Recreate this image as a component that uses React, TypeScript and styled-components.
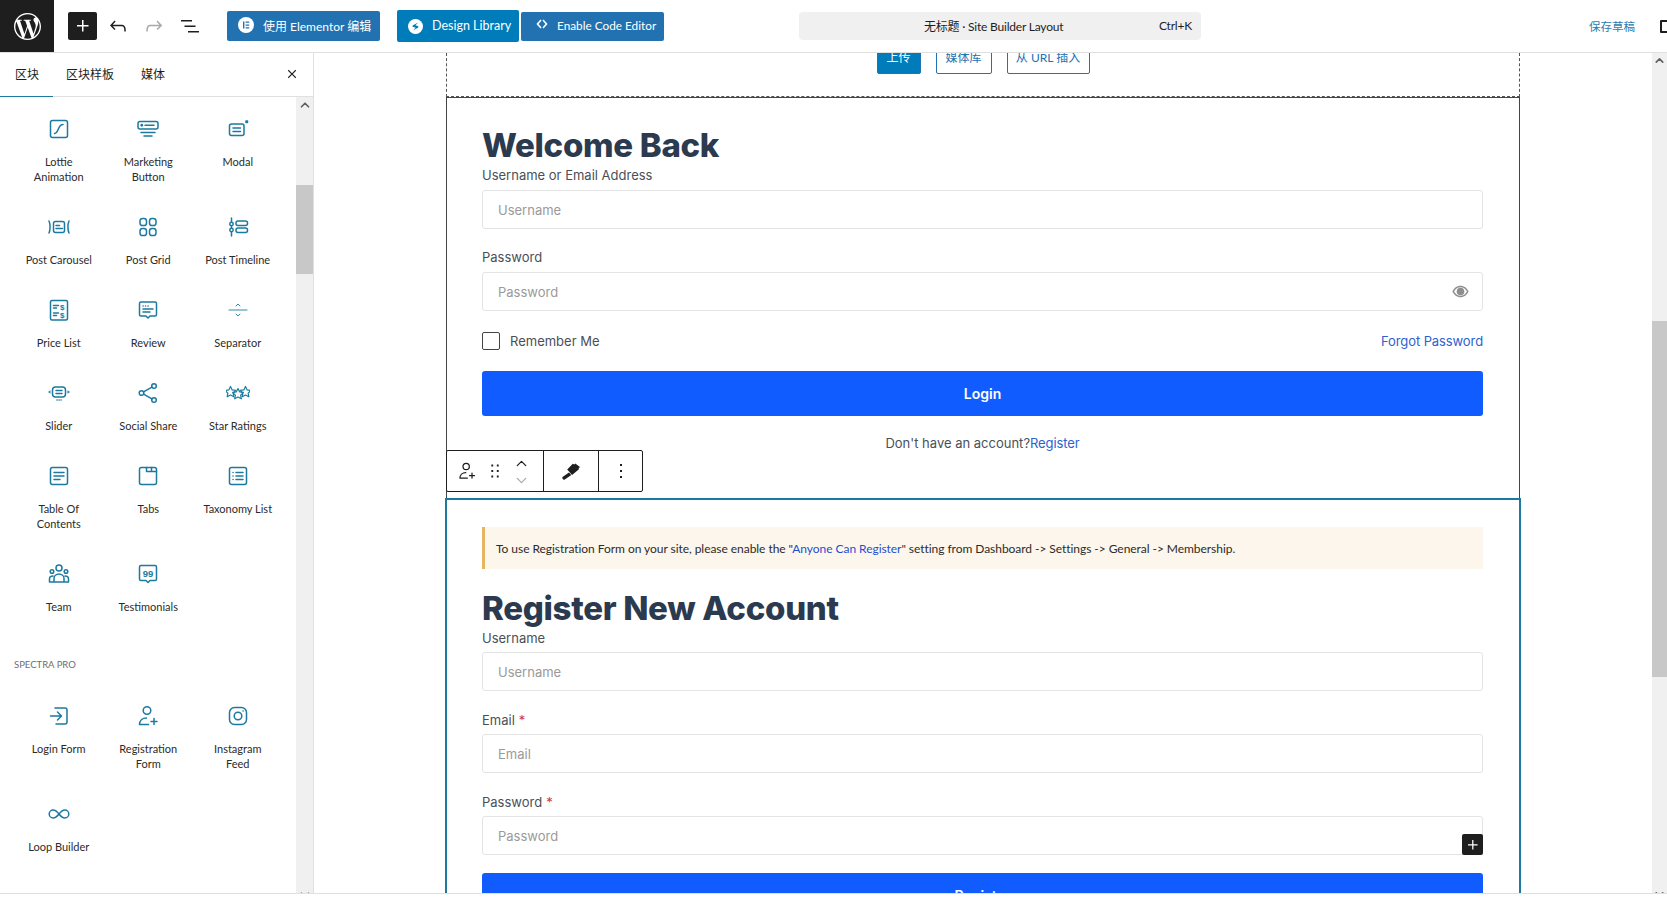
import React from "react";
import styled, { createGlobalStyle } from "styled-components";
import { SiWordpress } from "react-icons/si";
import { ChevronUp, ChevronDown } from "lucide-react";

const UI_FONT = `"Lato", "Noto Sans CJK SC", sans-serif`;
const FORM_FONT = `"Inter", "Noto Sans", sans-serif`;
const BLUE = "#2271b1";
const ACCENT = "#1c7aa0";

const GlobalStyle = createGlobalStyle`
  html, body { margin: 0; padding: 0; background: #fff; }
  * { box-sizing: border-box; }
`;

const Shell = styled.div`
  width: 1667px;
  height: 903px;
  display: flex;
  flex-direction: column;
  overflow: hidden;
  background: #fff;
  font-family: ${UI_FONT};
  color: #1e1e1e;
`;

/* top bar */
const TopBar = styled.header`
  height: 53px;
  flex: none;
  display: flex;
  align-items: center;
  border-bottom: 1px solid #e0e0e0;
  overflow: hidden;
`;

const LogoTile = styled.div`
  width: 54px;
  height: 52px;
  flex: none;
  display: flex;
  align-items: center;
  justify-content: center;
  background: #1e1e1e;
  color: #fff;
`;

const InserterButton = styled.div<{ $small?: boolean }>`
  width: ${(p) => (p.$small ? 21 : 29)}px;
  height: ${(p) => (p.$small ? 21 : 28)}px;
  margin-left: ${(p) => (p.$small ? 0 : 14)}px;
  margin-right: ${(p) => (p.$small ? 0 : 3)}px;
  flex: none;
  display: flex;
  align-items: center;
  justify-content: center;
  border-radius: 2px;
  background: #1e1e1e;
  color: #fff;
`;

const ToolIcon = styled.div<{ $muted?: boolean }>`
  width: 36px;
  flex: none;
  display: flex;
  justify-content: center;
  color: ${(p) => (p.$muted ? "#a8a8a8" : "#1e1e1e")};
`;

const BarButton = styled.div<{ $w: number; $h: number; $ml: number; $bg: string; $pad: number; $fs: number }>`
  width: ${(p) => p.$w}px;
  height: ${(p) => p.$h}px;
  margin-left: ${(p) => p.$ml}px;
  padding-left: ${(p) => p.$pad}px;
  flex: none;
  display: flex;
  align-items: center;
  gap: 9px;
  border-radius: 2px;
  background: ${(p) => p.$bg};
  color: #fff;
  font-size: ${(p) => p.$fs}px;
  white-space: nowrap;
  > span {
    margin-top: -2px;
  }
`;

const CommandBar = styled.div`
  width: 402px;
  height: 28px;
  margin-left: 135px;
  padding: 0 9px 2px 125px;
  flex: none;
  display: flex;
  align-items: center;
  justify-content: space-between;
  border-radius: 4px;
  background: #f0f0f0;
  font-size: 12px;
  letter-spacing: -0.2px;
  white-space: nowrap;
`;

const SaveDraft = styled.div`
  margin-left: 388px;
  flex: none;
  font-size: 11.5px;
  color: #2b7cb0;
  white-space: nowrap;
`;

const PreviewIcon = styled.div`
  width: 14px;
  height: 13px;
  margin-left: 25px;
  flex: none;
  border: 2px solid #1e1e1e;
  border-radius: 1px;
`;

/* body */
const Workspace = styled.div`
  height: 841px;
  flex: none;
  display: flex;
  border-bottom: 1px solid #e0e0e0;
  overflow: hidden;
`;

const Sidebar = styled.aside`
  width: 314px;
  flex: none;
  display: flex;
  flex-direction: column;
  border-right: 1px solid #e0e0e0;
`;

const TabRow = styled.div`
  height: 44px;
  flex: none;
  display: flex;
  align-items: stretch;
  position: relative;
  padding-left: 15px;
  gap: 27px;
  border-bottom: 1px solid #e0e0e0;
`;

const Tab = styled.div<{ $active?: boolean }>`
  padding-bottom: 2px;
  display: flex;
  align-items: center;
  position: relative;
  font-size: 12px;
  white-space: nowrap;
  &::after {
    content: "";
    display: ${(p) => (p.$active ? "block" : "none")};
    position: absolute;
    left: -15px;
    right: -14px;
    bottom: -1px;
    height: 1.5px;
    background: ${ACCENT};
  }
`;

const CloseTab = styled.div`
  position: absolute;
  right: 12px;
  top: 12px;
  display: flex;
`;

const SidebarBody = styled.div`
  flex: 1;
  min-height: 0;
  display: flex;
`;

const BlockScroll = styled.div`
  flex: 1;
  padding: 20px 0 0 14px;
  overflow: hidden;
`;

const BlockGrid = styled.div`
  display: grid;
  grid-template-columns: repeat(3, 89.5px);
  justify-items: center;
`;

const BlockItem = styled.div`
  width: 89px;
  padding-bottom: 31px;
  display: flex;
  flex-direction: column;
  align-items: center;
  color: ${ACCENT};
`;

const BlockLabel = styled.div`
  margin-top: 13px;
  text-align: center;
  font-size: 11px;
  line-height: 15px;
  color: #2b2b2b;
`;

const SectionTitle = styled.div`
  margin: 13px 0 32px;
  font-size: 9.5px;
  line-height: 14px;
  color: #6f6f6f;
`;

const ScrollTrack = styled.div<{ $w: number }>`
  width: ${(p) => p.$w}px;
  flex: none;
  display: flex;
  flex-direction: column;
  align-items: center;
  background: #f0f0f0;
  color: #606060;
`;

const ScrollThumb = styled.div<{ $top: number; $h: number }>`
  width: 100%;
  height: ${(p) => p.$h}px;
  margin-top: ${(p) => p.$top}px;
  background: #c8c8c8;
`;

const ScrollArrow = styled.div<{ $end?: boolean }>`
  height: 15px;
  flex: none;
  margin-top: ${(p) => (p.$end ? "auto" : "0")};
  margin-bottom: ${(p) => (p.$end ? "-9px" : "0")};
  display: flex;
  align-items: center;
  justify-content: center;
`;

/* canvas */
const Canvas = styled.main`
  flex: 1;
  min-width: 0;
  display: flex;
  flex-direction: column;
  align-items: center;
  overflow: hidden;
`;

const UploadStrip = styled.div`
  width: 1074px;
  height: 44px;
  flex: none;
  padding-bottom: 22px;
  display: flex;
  justify-content: center;
  align-items: flex-end;
  gap: 15px;
  border: 1px dashed #555;
  border-top: none;
`;

const UploadButton = styled.div<{ $primary?: boolean; $w: number }>`
  width: ${(p) => p.$w}px;
  height: 36px;
  flex: none;
  display: flex;
  align-items: center;
  justify-content: center;
  border: 1px solid ${BLUE};
  border-radius: 2px;
  background: ${(p) => (p.$primary ? "#007cba" : "#fff")};
  color: ${(p) => (p.$primary ? "#fff" : BLUE)};
  font-size: 12px;
  white-space: nowrap;
`;

const FormBlock = styled.section<{ $selected?: boolean }>`
  width: 1074px;
  flex: none;
  position: relative;
  padding: 27px 36px ${(p) => (p.$selected ? "0" : "48px")} 35px;
  border: 1px solid ${(p) => (p.$selected ? ACCENT : "#444")};
  border-bottom: ${(p) => (p.$selected ? undefined : "none")};
  outline: ${(p) => (p.$selected ? `1px solid ${ACCENT}` : "none")};
  font-family: ${FORM_FONT};
`;

const FormTitle = styled.h2<{ $mb: number }>`
  margin: 0 0 ${(p) => p.$mb}px;
  font-family: "Inter", sans-serif;
  font-size: 33px;
  line-height: 40px;
  font-weight: 800;
  letter-spacing: -0.3px;
  color: #2b3a4e;
`;

const Field = styled.div<{ $gap: number; $labelGap: number }>`
  position: relative;
  margin-bottom: ${(p) => p.$gap}px;
  > label {
    margin-bottom: ${(p) => p.$labelGap}px;
  }
`;

const FieldLabel = styled.label`
  display: block;
  font-size: 13px;
  line-height: 16px;
  color: #4a5058;
`;

const Required = styled.span`
  margin-left: 4px;
  color: #d63638;
`;

const InputBox = styled.div`
  height: 39px;
  padding: 0 13px 0 15px;
  display: flex;
  align-items: center;
  justify-content: space-between;
  border: 1px solid #e4e4e4;
  border-radius: 3px;
  font-size: 13px;
  color: #9a9a9a;
`;

const FieldPlus = styled.div`
  position: absolute;
  right: 0;
  bottom: 0;
`;

const OptionsRow = styled.div`
  height: 18px;
  margin-bottom: 21px;
  display: flex;
  align-items: center;
  justify-content: space-between;
`;

const RememberWrap = styled.div`
  display: flex;
  align-items: center;
  gap: 10px;
  font-size: 13px;
  color: #4a5058;
`;

const CheckBox = styled.div`
  width: 18px;
  height: 18px;
  border: 1px solid #444;
  border-radius: 2px;
`;

const FormLink = styled.a`
  color: #2c62cf;
  font-size: 13px;
  letter-spacing: -0.1px;
  text-decoration: none;
`;

const SubmitButton = styled.div`
  height: 45px;
  display: flex;
  align-items: center;
  justify-content: center;
  border-radius: 3px;
  background: #105cff;
  color: #fff;
  font-size: 14px;
  font-weight: 600;
`;

const SignupLine = styled.div`
  margin-top: 19px;
  text-align: center;
  font-size: 13px;
  line-height: 16px;
  color: #4a5058;
`;

const BlockToolbar = styled.div`
  position: absolute;
  left: -1px;
  bottom: 7px;
  height: 42px;
  display: flex;
  border: 1px solid #1e1e1e;
  border-radius: 2px;
  background: #fff;
`;

const ToolbarGroup = styled.div<{ $w: number }>`
  width: ${(p) => p.$w}px;
  display: flex;
  align-items: center;
  justify-content: center;
  color: #1e1e1e;
  & + & {
    border-left: 1px solid #1e1e1e;
  }
`;

const MoverGroup = styled(ToolbarGroup)`
  padding-left: 10px;
  justify-content: flex-start;
  gap: 7px;
`;

const MoverStack = styled.div`
  display: flex;
  flex-direction: column;
  align-items: center;
  margin-top: 1px;
  color: #1e1e1e;
  > svg:last-child {
    color: #aaa;
  }
`;

const Notice = styled.div`
  height: 42px;
  margin-bottom: 19px;
  padding-left: 11px;
  display: flex;
  align-items: center;
  border-left: 3px solid #e5b660;
  background: #fdf6ec;
  font-family: ${UI_FONT};
  font-size: 12px;
  letter-spacing: -0.05px;
  color: #2b2b2b;
  white-space: nowrap;
  a {
    color: #1e4fd0;
    text-decoration: none;
  }
`;

/* drawings */
const Glyph = ({ children, size = 24 }: { children: React.ReactNode; size?: number }) => (
  <svg width={size} height={size} viewBox="0 0 24 24" fill="none" stroke="currentColor" strokeWidth={1.5} strokeLinecap="round" strokeLinejoin="round">
    {children}
  </svg>
);

const WpIcon = ({ d, size = 24 }: { d: string; size?: number }) => (
  <svg width={size} height={size} viewBox="0 0 24 24" fill="currentColor">
    <path d={d} />
  </svg>
);

const PLUS = "M11 12.5V17.5H12.5V12.5H17.5V11H12.5V6H11V11H6V12.5H11Z";
const UNDO = "M18.3 11.7c-.6-.6-1.4-.9-2.3-.9H6.7l2.9-3.3-1.1-1-4.5 5L8.5 16l1-1-2.7-2.7H16c.5 0 .9.2 1.3.5 1 1 1 3.4 1 4.5v.3h1.5v-.2c0-1.5 0-4.3-1.5-5.7z";
const REDO = "M15.6 6.5l-1.1 1 2.9 3.3H8c-.9 0-1.7.3-2.3.9-1.4 1.5-1.4 4.2-1.4 5.6v.2h1.5v-.3c0-1.1 0-3.5 1-4.5.3-.3.7-.5 1.3-.5h9.2L14.5 15l1.1 1.1 4.6-4.6-4.6-5z";
const LIST_VIEW = "M3 6h11v1.5H3V6zm3.5 5.5h11V13h-11v-1.5zM21 17H10v1.5h11V17z";
const DRAG = "M8 7h2V5H8v2zm0 6h2v-2H8v2zm0 6h2v-2H8v2zm6-14v2h2V5h-2zm0 8h2v-2h-2v2zm0 6h2v-2h-2v2z";
const MORE = "M13 19h-2v-2h2v2zm0-6h-2v-2h2v2zm0-6h-2V5h2v2z";
const CLOSE = "M12 13.06l4.47 4.47 1.06-1.06L13.06 12l4.47-4.47-1.06-1.06L12 10.94 7.53 6.47 6.47 7.53 10.94 12l-4.47 4.47 1.06 1.06z";

const STAR = "M0-4.6l1.4 2.9 3.1.4-2.3 2.2.6 3.1L0 2.5l-2.8 1.5.6-3.1-2.3-2.2 3.1-.4z";

const UserPlus = () => (
  <>
    <circle cx="11" cy="6.5" r="3.8" />
    <path d="M3.5 20.5c0-4 3-6.5 7-6.5M3.5 20.5h9M18 14.5v6M15 17.5h6" />
  </>
);

type Block = { label: React.ReactNode; icon: React.ReactNode };

const coreBlocks: Block[] = [
  { label: <>Lottie<br />Animation</>, icon: <><rect x="3.5" y="3.5" width="17" height="17" rx="2" /><path d="M7.5 16.5c4.5 0 3-9 8.5-9" /></> },
  { label: <>Marketing<br />Button</>, icon: <g transform="translate(0 1)"><rect x="2" y="3.5" width="20" height="7.5" rx="2" /><path d="M9 7.2h9M5 14.5h14M8 18h8" /><circle cx="5.8" cy="7.2" r=".7" /></g> },
  { label: "Modal", icon: <><rect x="3.5" y="7" width="14.5" height="11.5" rx="2" /><path d="M7 11h7.5M7 14.5h7.5" /><rect x="20" y="4" width="1.5" height="1.5" /></> },
  { label: "Post Carousel", icon: <><rect x="6.5" y="6.5" width="11" height="11" rx="2" /><path d="M9 10.5h3.5M9 13.5h6.5M2 6c1.4 3 1.4 9 0 12M22 6c-1.4 3-1.4 9 0 12" /></> },
  { label: "Post Grid", icon: <><rect x="4" y="3.5" width="6.5" height="7" rx="2.6" /><rect x="13.5" y="3.5" width="6.5" height="7" rx="2.6" /><rect x="4" y="13.5" width="6.5" height="7" rx="2.6" /><rect x="13.5" y="13.5" width="6.5" height="7" rx="2.6" /></> },
  { label: "Post Timeline", icon: <><path d="M5.5 3v18" /><circle cx="5.5" cy="9" r="1.7" fill="#fff" /><circle cx="5.5" cy="15" r="1.7" fill="#fff" /><rect x="10" y="6" width="11.5" height="4.5" rx="2" /><rect x="10" y="13" width="11.5" height="4.5" rx="2" /></> },
  { label: "Price List", icon: <><rect x="3.5" y="2.5" width="17" height="19.5" rx="1.5" /><path d="M6.5 7.5h5M6.5 10h3M6.5 15h5M6.5 17.5h3" /><text x="13" y="11.5" fontSize="8" fontWeight="700" fill="currentColor" stroke="none" fontFamily="Liberation Sans">$</text><text x="13" y="19.5" fontSize="8" fontWeight="700" fill="currentColor" stroke="none" fontFamily="Liberation Sans">$</text></> },
  { label: "Review", icon: <><path d="M5 4h14a1.5 1.5 0 0 1 1.5 1.5v11A1.5 1.5 0 0 1 19 18h-5l-2 2-2-2H5a1.5 1.5 0 0 1-1.5-1.5v-11A1.5 1.5 0 0 1 5 4z" /><path d="M7 8h.1M9.5 8h.1M12 8h.1M7 11h10M7 14h7" /></> },
  { label: "Separator", icon: <g strokeWidth={0.9}><path d="M3 12h18M10 8l2-2 2 2M10 16l2 2 2-2" /></g> },
  { label: "Slider", icon: <><rect x="5.5" y="6" width="13" height="10" rx="3" /><path d="M9 9.5h6M9 12.5h6M10 19h.1M12 19h.1M14 19h.1" /><path d="M3 10l-1.5 1L3 12zM21 10l1.5 1-1.5 1z" fill="currentColor" strokeWidth={0.6} /></> },
  { label: "Social Share", icon: <><circle cx="18" cy="5" r="2.3" /><circle cx="5.5" cy="12" r="2.3" /><circle cx="18" cy="19" r="2.3" /><path d="M7.6 10.9l8.3-4.8M7.6 13.1l8.3 4.8" /></> },
  { label: "Star Ratings", icon: <g strokeWidth={1}><path transform="translate(4.5 11) scale(1.2)" d={STAR} /><path transform="translate(12 13) scale(1.2)" d={STAR} /><path transform="translate(19.5 11) scale(1.2)" d={STAR} /></g> },
  { label: <>Table Of<br />Contents</>, icon: <><rect x="3.5" y="3.5" width="17" height="17" rx="2" /><path d="M7 8.5h10M7 12h10M7 15.5h6" /></> },
  { label: "Tabs", icon: <><rect x="3.5" y="3.5" width="17" height="17" rx="2" /><path d="M10.5 3.5v4h10M15.5 3.5v4" /></> },
  { label: "Taxonomy List", icon: <><rect x="3.5" y="3.5" width="17" height="17" rx="2" /><path d="M7 8.5h.1M7 12h.1M7 15.5h.1M10 8.5h7M10 12h7M10 15.5h7" /></> },
  { label: "Team", icon: <><circle cx="12" cy="6" r="3" /><circle cx="5" cy="9.5" r="1.8" /><circle cx="19" cy="9.5" r="1.8" /><path d="M7 20v-3.5a5 4.5 0 0 1 10 0V20M2.5 20v-3c0-2 1.5-3 3.5-3M21.5 20v-3c0-2-1.5-3-3.5-3M2.5 20h19" /></> },
  { label: "Testimonials", icon: <><path d="M5 3.5h14a1.5 1.5 0 0 1 1.5 1.5v12a1.5 1.5 0 0 1-1.5 1.5h-5l-2 2-2-2H5A1.5 1.5 0 0 1 3.5 17V5A1.5 1.5 0 0 1 5 3.5z" /><text x="12" y="14.5" textAnchor="middle" fontSize="9.5" fontWeight="700" fill="currentColor" stroke="none" fontFamily="Liberation Sans">99</text></> },
];

const proBlocks: Block[] = [
  { label: "Login Form", icon: <><path d="M8 4h10a2 2 0 0 1 2 2v12a2 2 0 0 1-2 2H9" /><path d="M3.5 12h11M10.5 8l4 4-4 4" /></> },
  { label: <>Registration<br />Form</>, icon: <UserPlus /> },
  { label: <>Instagram<br />Feed</>, icon: <><rect x="3.5" y="3.5" width="17" height="17" rx="5" /><circle cx="12" cy="12" r="3.8" /><path d="M17 7h.1" /></> },
  { label: "Loop Builder", icon: <path d="M12 12c-2-2.6-3.6-4-5.8-4a4 4 0 0 0 0 8c2.2 0 3.8-1.4 5.8-4zm0 0c2 2.6 3.6 4 5.8 4a4 4 0 0 0 0-8c-2.2 0-3.8 1.4-5.8 4z" /> },
];

const renderBlocks = (items: Block[]) =>
  items.map((item, i) => (
    <BlockItem key={i}>
      <Glyph>{item.icon}</Glyph>
      <BlockLabel>{item.label}</BlockLabel>
    </BlockItem>
  ));

const Scrollbar = ({ width, top, height, arrow }: { width: number; top: number; height: number; arrow: number }) => (
  <ScrollTrack $w={width}>
    <ScrollArrow>
      <ChevronUp size={arrow} strokeWidth={3} />
    </ScrollArrow>
    <ScrollThumb $top={top} $h={height} />
    <ScrollArrow $end>
      <ChevronDown size={arrow} strokeWidth={3} />
    </ScrollArrow>
  </ScrollTrack>
);

const App = () => (
  <Shell>
    <GlobalStyle />
    <TopBar>
      <LogoTile>
        <SiWordpress size={27} />
      </LogoTile>
      <InserterButton>
        <WpIcon d={PLUS} />
      </InserterButton>
      <ToolIcon><WpIcon d={UNDO} /></ToolIcon>
      <ToolIcon $muted><WpIcon d={REDO} /></ToolIcon>
      <ToolIcon><WpIcon d={LIST_VIEW} /></ToolIcon>
      <BarButton $w={153} $h={30} $ml={19} $bg={BLUE} $pad={11} $fs={12}>
        <svg width="16" height="16" viewBox="0 0 16 16" style={{ marginTop: -2 }}>
          <circle cx="8" cy="8" r="8" fill="#fff" />
          <path d="M5 4.5h1.4v7H5zM7.6 4.5h3.6v1.3H7.6zM7.6 7.4h3.6v1.3H7.6zM7.6 10.2h3.6v1.3H7.6z" fill={BLUE} />
        </svg>
        <span>使用 Elementor 编辑</span>
      </BarButton>
      <BarButton $w={122} $h={32} $ml={17} $bg="#007cba" $pad={11} $fs={12.5}>
        <svg width="15" height="15" viewBox="0 0 16 16">
          <circle cx="8" cy="8" r="8" fill="#fff" />
          <path d="M10.8 3.6L5.4 6.6c-.9.6-.7 1.6.2 1.9l2.6.8-2.9 3 5.2-3c1-.6.8-1.6-.2-1.9l-2.4-.8z" fill="#007cba" />
        </svg>
        <span>Design Library</span>
      </BarButton>
      <BarButton $w={143} $h={29} $ml={2} $bg={BLUE} $pad={15} $fs={11.8}>
        <svg width="12" height="12" viewBox="0 0 12 12" fill="none" stroke="#fff" strokeWidth="1.6" style={{ marginTop: -5 }}>
          <path d="M5 2L1.5 6 5 10M7 2l3.5 4L7 10" />
        </svg>
        <span>Enable Code Editor</span>
      </BarButton>
      <CommandBar>
        <span>无标题 · Site Builder Layout</span>
        <span>Ctrl+K</span>
      </CommandBar>
      <SaveDraft>保存草稿</SaveDraft>
      <PreviewIcon />
    </TopBar>

    <Workspace>
      <Sidebar>
        <TabRow>
          <Tab $active>区块</Tab>
          <Tab>区块样板</Tab>
          <Tab>媒体</Tab>
          <CloseTab>
            <WpIcon d={CLOSE} size={18} />
          </CloseTab>
        </TabRow>
        <SidebarBody>
          <BlockScroll>
            <BlockGrid>{renderBlocks(coreBlocks)}</BlockGrid>
            <SectionTitle>SPECTRA PRO</SectionTitle>
            <BlockGrid>{renderBlocks(proBlocks)}</BlockGrid>
          </BlockScroll>
          <Scrollbar width={17} top={73} height={89} arrow={14} />
        </SidebarBody>
      </Sidebar>

      <Canvas>
        <UploadStrip>
          <UploadButton $primary $w={44}>上传</UploadButton>
          <UploadButton $w={56}>媒体库</UploadButton>
          <UploadButton $w={83}>从 URL 插入</UploadButton>
        </UploadStrip>

        <FormBlock>
          <FormTitle $mb={2}>Welcome Back</FormTitle>
          <Field $gap={20} $labelGap={7}>
            <FieldLabel>Username or Email Address</FieldLabel>
            <InputBox>Username</InputBox>
          </Field>
          <Field $gap={21} $labelGap={7}>
            <FieldLabel>Password</FieldLabel>
            <InputBox>
              <span>Password</span>
              <svg width="17" height="13" viewBox="0 0 16 12">
                <path d="M8 .6C4.6.6 1.8 2.8.4 6c1.4 3.2 4.2 5.4 7.6 5.4s6.2-2.2 7.6-5.4C14.2 2.8 11.4.6 8 .6zm0 9.4C5.6 10 3.3 8.6 1.9 6 3.3 3.4 5.6 2 8 2s4.7 1.4 6.1 4C12.7 8.6 10.4 10 8 10z" fill="#8e8e8e" />
                <circle cx="8" cy="6" r="3.6" fill="#8e8e8e" />
              </svg>
            </InputBox>
          </Field>
          <OptionsRow>
            <RememberWrap>
              <CheckBox />
              <span>Remember Me</span>
            </RememberWrap>
            <FormLink href="#">Forgot Password</FormLink>
          </OptionsRow>
          <SubmitButton>Login</SubmitButton>
          <SignupLine>
            Don't have an account?<FormLink href="#">Register</FormLink>
          </SignupLine>
          <BlockToolbar>
            <MoverGroup $w={96}>
              <Glyph size={20}><UserPlus /></Glyph>
              <WpIcon d={DRAG} size={22} />
              <MoverStack>
                <ChevronUp size={17} strokeWidth={1.8} />
                <ChevronDown size={17} strokeWidth={1.8} />
              </MoverStack>
            </MoverGroup>
            <ToolbarGroup $w={55}>
              <svg width="20" height="20" viewBox="0 0 20 20" fill="#1e1e1e">
                <path d="M1.5 16l6.5-4.6 2.3 2.6L3.8 18.6c-1.5.8-3.1-1.3-2.3-2.6z" />
                <path d="M6.2 8.6l5.6-5.8 1.6.8.9-1 5 3.6-1.6.6.2 1.4-6.8 5.8z" />
              </svg>
            </ToolbarGroup>
            <ToolbarGroup $w={44}>
              <WpIcon d={MORE} />
            </ToolbarGroup>
          </BlockToolbar>
        </FormBlock>

        <FormBlock $selected>
          <Notice>
            <span>
              To use Registration Form on your site, please enable the "<a href="#">Anyone Can Register</a>" setting from Dashboard -&gt; Settings -&gt; General -&gt; Membership.
            </span>
          </Notice>
          <FormTitle $mb={2}>Register New Account</FormTitle>
          <Field $gap={21} $labelGap={6}>
            <FieldLabel>Username</FieldLabel>
            <InputBox>Username</InputBox>
          </Field>
          <Field $gap={21} $labelGap={6}>
            <FieldLabel>Email<Required>*</Required></FieldLabel>
            <InputBox>Email</InputBox>
          </Field>
          <Field $gap={18} $labelGap={6}>
            <FieldLabel>Password<Required>*</Required></FieldLabel>
            <InputBox>Password</InputBox>
            <FieldPlus>
              <InserterButton $small>
                <WpIcon d={PLUS} size={20} />
              </InserterButton>
            </FieldPlus>
          </Field>
          <SubmitButton>Register</SubmitButton>
        </FormBlock>
      </Canvas>

      <Scrollbar width={15} top={253} height={356} arrow={13} />
    </Workspace>
  </Shell>
);

export default App;
